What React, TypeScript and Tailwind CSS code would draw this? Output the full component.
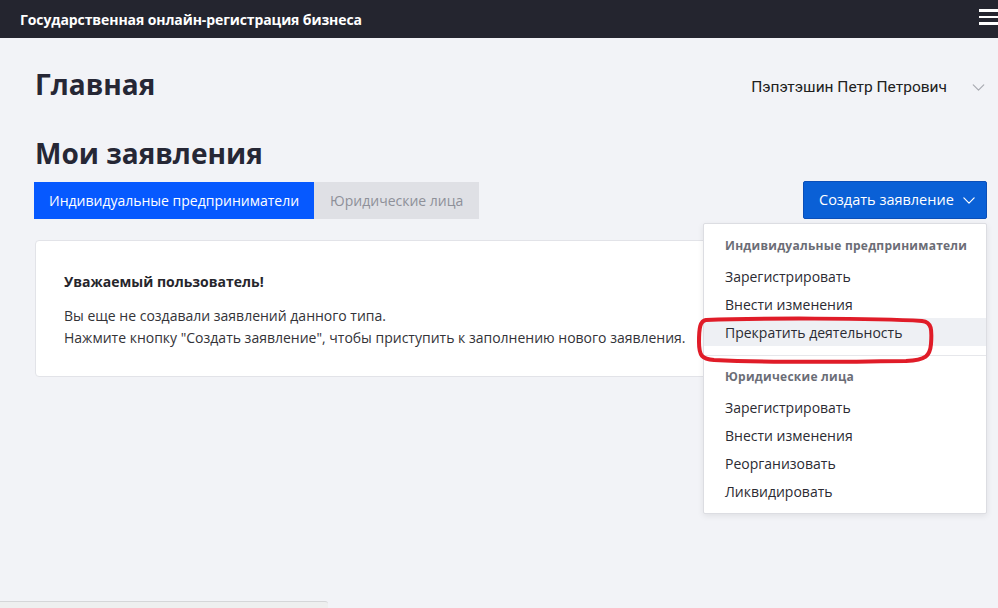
import React from "react";

const Chevron = ({ className = "" }: { className?: string }) => (
  <svg viewBox="0 0 14 8" className={className} fill="none" stroke="currentColor" strokeWidth="1.4" strokeLinecap="round" strokeLinejoin="round">
    <path d="M1 1l6 6 6-6" />
  </svg>
);

export default function App() {
  const item = "h-[28px] flex items-center pl-[21px] text-[14px] text-[#2b2b33]";
  const head = "h-[28px] flex items-center pl-[21px] text-[12px] font-bold text-[#6b6d76] tracking-[0.25px]";
  return (
    <div className="relative w-full min-h-[608px] bg-[#f2f3f7] overflow-hidden" style={{ fontFamily: '"Open Sans", sans-serif' }}>
      {/* top bar */}
      <div className="h-[38px] bg-[#24252f] flex items-center justify-between pl-[20px]">
        <span className="text-white font-bold text-[14px] tracking-[-0.1px]">Государственная онлайн-регистрация бизнеса</span>
        <div className="flex flex-col gap-[4px] w-[19px] self-start mt-[9px] ml-auto">
          <span className="block h-[2.5px] bg-white" />
          <span className="block h-[2.5px] bg-white" />
          <span className="block h-[2.5px] bg-white" />
        </div>
      </div>

      <div className="pl-[35px] pr-[11px] pt-[28px]">
        <div className="flex items-start justify-between">
          <h1 className="text-[28px] leading-[36px] font-bold text-[#262735]">Главная</h1>
          <div className="flex items-center mt-[10px] mr-[2px]">
            <span className="text-[15.5px] text-[#202020]" style={{ fontFamily: "Roboto, sans-serif" }}>Пэпэтэшин Петр Петрович</span>
            <Chevron className="w-[13px] h-[7px] ml-[25px] text-[#a9abb2]" />
          </div>
        </div>

        <h2 className="mt-[33px] text-[28px] leading-[36px] font-bold text-[#262735]">Мои заявления</h2>

        <div className="mt-[11px] flex items-start justify-between">
          <div className="flex">
            <div className="h-[37px] px-[15px] flex items-center bg-[#0659ff] text-white text-[14px] ml-[-1px]">Индивидуальные предприниматели</div>
            <div className="h-[37px] px-[16px] flex items-center bg-[#dfe0e5] text-[#8e9099] text-[14px]">Юридические лица</div>
          </div>
          <div className="h-[38px] w-[184px] mt-[-1px] rounded-[2px] border border-[#0b4fb8] bg-[#0a60d6] text-white text-[14.5px] flex items-center pl-[15px]">
            <span>Создать заявление</span>
            <Chevron className="w-[12px] h-[7px] ml-[9px] text-white" />
          </div>
        </div>

        <div className="mt-[21px] w-[760px] bg-white border border-[#e2e3e8] rounded-[4px] pl-[28px] pt-[30px] pb-[27px]">
          <div className="text-[14px] font-bold text-[#26262c]">Уважаемый пользователь!</div>
          <div className="mt-[13px] text-[14px] leading-[22px] text-[#333338]">
            <div>Вы еще не создавали заявлений данного типа.</div>
            <div>Нажмите кнопку "Создать заявление", чтобы приступить к заполнению нового заявления.</div>
          </div>
        </div>
      </div>

      {/* dropdown menu */}
      <div className="absolute left-[703px] top-[223px] w-[284px] h-[291px] bg-white border border-[#dcdde2] rounded-[2px] shadow-[0_2px_6px_rgba(0,0,0,0.08)] pt-[8px]">
        <div className={head}>Индивидуальные предприниматели</div>
        <div className="mt-[2px]">
          <div className={item}>Зарегистрировать</div>
          <div className={item}>Внести изменения</div>
          <div className={item + " bg-[#eef0f4]"}>Прекратить деятельность</div>
        </div>
        <div className="mt-[9px] border-t border-[#e6e7eb]" />
        <div className={"mt-[7px] " + head}>Юридические лица</div>
        <div className="mt-[2px]">
          <div className={item}>Зарегистрировать</div>
          <div className={item}>Внести изменения</div>
          <div className={item}>Реорганизовать</div>
          <div className={item}>Ликвидировать</div>
        </div>
      </div>

      {/* red annotation */}
      <svg className="absolute left-[695px] top-[315px] w-[242px] h-[49px]" viewBox="0 0 242 49" fill="none">
        <path d="M11 5 C60 3 180 3 227 6 C237 7 237 15 236 29 C235 41 231 45 211 46 C150 47 60 47 19 45 C7 44 4 41 4 27 C4 13 5 6 11 5 Z" stroke="#e01c28" strokeWidth="4" />
      </svg>

      {/* bottom bar fragment */}
      <div className="absolute left-0 bottom-0 w-[328px] h-[7px] border-t border-[#d5d6d8] bg-[#eeefef] rounded-tr-[3px]" />
    </div>
  );
}
